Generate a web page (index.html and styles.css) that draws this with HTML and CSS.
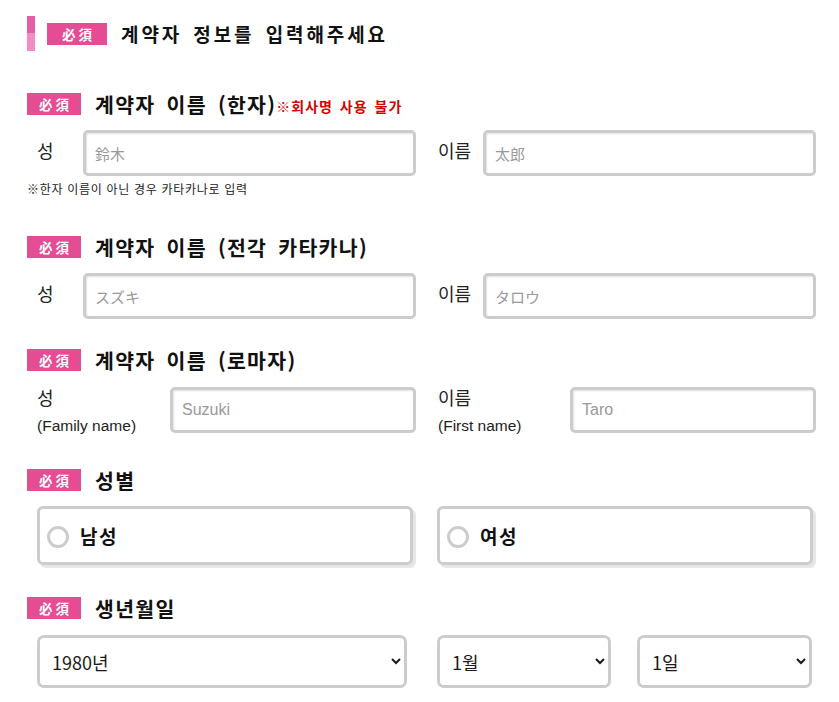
FILE: index.html
```html
<!DOCTYPE html>
<html lang="ko">
<head>
<meta charset="utf-8">
<title>계약자 정보</title>
<link rel="stylesheet" href="styles.css">
</head>
<body>
<div class="page">
  <div class="page-head">
    <span class="bar"></span>
    <span class="badge badge-lg">必須</span>
    <h1 class="page-title">계약자 정보를 입력해주세요</h1>
  </div>

  <section class="section sec-kanji">
    <div class="sec-head">
      <span class="badge">必須</span>
      <h2 class="sec-title">계약자 이름 (한자)</h2><span class="warn">※회사명 사용 불가</span>
    </div>
    <div class="pair">
      <div class="field">
        <label class="lbl">성</label>
        <input class="txt" type="text" placeholder="鈴木">
      </div>
      <div class="field">
        <label class="lbl">이름</label>
        <input class="txt" type="text" placeholder="太郎">
      </div>
    </div>
    <p class="hint">※한자 이름이 아닌 경우 카타카나로 입력</p>
  </section>

  <section class="section sec-kana">
    <div class="sec-head">
      <span class="badge">必須</span>
      <h2 class="sec-title">계약자 이름 (전각 카타카나)</h2>
    </div>
    <div class="pair">
      <div class="field">
        <label class="lbl">성</label>
        <input class="txt" type="text" placeholder="スズキ">
      </div>
      <div class="field">
        <label class="lbl">이름</label>
        <input class="txt" type="text" placeholder="タロウ">
      </div>
    </div>
  </section>

  <section class="section sec-roma">
    <div class="sec-head">
      <span class="badge">必須</span>
      <h2 class="sec-title">계약자 이름 (로마자)</h2>
    </div>
    <div class="pair">
      <div class="field field-wide">
        <label class="lbl lbl-wide">성<span class="sub">(Family name)</span></label>
        <input class="txt txt-roma" type="text" placeholder="Suzuki">
      </div>
      <div class="field field-wide">
        <label class="lbl lbl-wide">이름<span class="sub">(First name)</span></label>
        <input class="txt txt-roma" type="text" placeholder="Taro">
      </div>
    </div>
  </section>

  <section class="section sec-gender">
    <div class="sec-head">
      <span class="badge">必須</span>
      <h2 class="sec-title">성별</h2>
    </div>
    <div class="pair">
      <label class="radio-box"><span class="circle"></span><span class="radio-text">남성</span></label>
      <label class="radio-box"><span class="circle"></span><span class="radio-text">여성</span></label>
    </div>
  </section>

  <section class="section sec-birth">
    <div class="sec-head">
      <span class="badge">必須</span>
      <h2 class="sec-title">생년월일</h2>
    </div>
    <div class="selects">
      <select class="sel sel-year"><option>1980년</option></select>
      <select class="sel sel-month"><option>1월</option></select>
      <select class="sel sel-day"><option>1일</option></select>
    </div>
  </section>
</div>
</body>
</html>
```

FILE: styles.css
```css
* { box-sizing: border-box; }
html, body { margin: 0; padding: 0; background: #fff; }
body {
  font-family: "Noto Sans CJK KR", "Noto Sans", sans-serif;
  color: #111;
  width: 839px;
  height: 702px;
  overflow: hidden;
}
.page { padding: 16px 0 0 27px; }

.page-head {
  display: flex;
  align-items: center;
  height: 35px;
}
.bar {
  width: 8px;
  height: 35px;
  background: linear-gradient(#e95ba7 0 50%, #f38cc6 50% 100%);
}
.badge {
  display: inline-flex;
  align-items: center;
  justify-content: center;
  width: 54px;
  height: 22px;
  background: #e44c94;
  color: #fff;
  font-family: "Noto Sans CJK JP", sans-serif;
  font-weight: 700;
  font-size: 13.5px;
  letter-spacing: 3px;
  padding-left: 3px;
  line-height: 22px;
  flex: none;
}
.badge-lg { width: 60px; margin-left: 12px; }
.page-title {
  margin: 0 0 0 14px;
  font-size: 19px;
  font-weight: 700;
  letter-spacing: 2.9px;
  word-spacing: 3px;
  line-height: 24px;
}

.section { margin-top: 42px; }
.sec-kana { margin-top: 40px; }
.sec-roma { margin-top: 30px; }
.sec-gender { margin-top: 34px; }
.sec-birth { margin-top: 32px; }

.sec-head {
  display: flex;
  align-items: center;
  height: 22px;
}
.sec-title {
  margin: 0 0 0 14px;
  font-size: 20.5px;
  font-weight: 700;
  letter-spacing: 1.3px;
  word-spacing: 4px;
  line-height: 26px;
}
.warn {
  color: #d40000;
  font-size: 14px;
  font-weight: 700;
  letter-spacing: 1px;
  word-spacing: 2px;
  line-height: 18px;
  padding-top: 3px;
}

.pair {
  display: grid;
  grid-template-columns: 379px 379px;
  column-gap: 21px;
  margin: 15px 0 0 10px;
}
.field {
  display: flex;
  align-items: flex-start;
}
.lbl {
  width: 46px;
  flex: none;
  font-size: 18px;
  line-height: 22px;
  padding-top: 9px;
  color: #222;
}
.field + .field .lbl { padding-left: 1px; }
.txt {
  width: 333px;
  height: 46px;
  border: 3px solid #ccc;
  border-radius: 5px;
  box-shadow: inset 1px 1px 2px rgba(0,0,0,0.12);
  padding: 0 9px;
  font-family: "Noto Sans CJK KR", sans-serif;
  font-size: 15px;
  color: #333;
  outline: none;
  background: #fff;
}
.txt::placeholder { color: #999; }
.txt-roma {
  width: 246px;
  font-family: "Liberation Sans", Arial, sans-serif;
  font-size: 16px;
  margin-top: 1px;
}
.lbl-wide {
  width: 133px;
  display: flex;
  flex-direction: column;
  padding-top: 0;
}
.sub {
  font-family: "Liberation Sans", Arial, sans-serif;
  font-size: 15.5px;
  line-height: 18px;
  margin-top: 9px;
}

.hint {
  margin: 5px 0 0 0;
  font-size: 12px;
  letter-spacing: 0.7px;
  line-height: 15px;
  color: #222;
}

.radio-box {
  display: flex;
  align-items: center;
  width: 376px;
  height: 59px;
  border: 3px solid #ccc;
  border-radius: 6px;
  box-shadow: 3px 3px 1px rgba(0,0,0,0.1);
  padding-left: 7px;
  background: #fff;
}
.circle {
  width: 22px;
  height: 22px;
  border: 3px solid #ccc;
  border-radius: 50%;
  flex: none;
  margin-top: 2px;
}
.radio-text {
  margin-left: 11px;
  font-size: 19px;
  font-weight: 700;
  line-height: 24px;
  letter-spacing: 1.5px;
}

.selects {
  display: flex;
  margin: 16px 0 0 10px;
}
.sel {
  height: 53px;
  border: 3px solid #ccc;
  border-radius: 7px;
  background: #fff;
  font-family: "Noto Sans CJK KR", sans-serif;
  font-size: 18px;
  color: #1a1a1a;
  padding: 0 6px 0 8px;
  outline: none;
}
.sel-year { width: 370px; }
.sel-month { width: 174px; margin-left: 30px; }
.sel-day { width: 175px; margin-left: 26px; }
```
